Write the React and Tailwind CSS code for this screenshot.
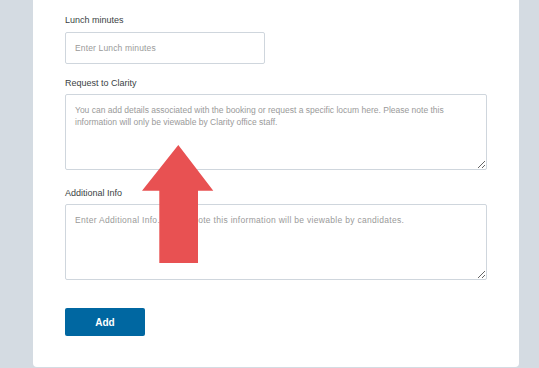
import React from 'react';

const Label = ({ children, className = '' }) => (
  <label className={`block text-[9px] leading-[12px] text-[#3b3f44] ${className}`}>{children}</label>
);

const fieldBase =
  'block border border-[#cfd6dd] rounded-[2px] bg-white text-[8.5px] leading-[12px] text-[#333] placeholder:text-[#9a9a9a] outline-none';

const App = () => {
  return (
    <div
      className="relative h-[368px] w-[539px] overflow-hidden bg-[#d4dbe2]"
      style={{ fontFamily: '"Liberation Sans", Arial, sans-serif' }}
    >
      <div className="ml-[33px] h-[367px] w-[486px] rounded-b-[4px] bg-white px-8 pt-[14px]">
        <Label>Lunch minutes</Label>
        <input
          type="text"
          placeholder="Enter Lunch minutes"
          className={`${fieldBase} mt-[6px] h-[32px] w-[200px] px-[9px] placeholder:tracking-[0.15px]`}
        />

        <Label className="mt-[13px]">Request to Clarity</Label>
        <textarea
          placeholder={
            'You can add details associated with the booking or request a specific locum here. Please note this\ninformation will only be viewable by Clarity office staff.'
          }
          className={`${fieldBase} mt-[5px] h-[76px] w-[422px] px-[9px] pt-[9px]`}
        />

        <Label className="mt-[17px]">Additional Info</Label>
        <textarea
          placeholder="Enter Additional Info. Please note this information will be viewable by candidates."
          className={`${fieldBase} mt-[5px] h-[76px] w-[422px] px-[9px] pt-[9px] placeholder:tracking-[0.3px]`}
        />

        <button className="mt-[28px] h-[28px] w-[80px] rounded-[2px] bg-[#0067a1] text-[10px] font-bold text-white">
          Add
        </button>
      </div>

      {/* red annotation arrow */}
      <svg
        className="absolute left-[142px] top-[145px]"
        width="72"
        height="118"
        viewBox="0 0 72 118"
      >
        <polygon
          points="36.3,0 71.3,45.7 56,45.7 56,118 17.3,118 17.3,45.7 0,45.7"
          fill="#e85152"
        />
      </svg>
    </div>
  );
};

export default App;
